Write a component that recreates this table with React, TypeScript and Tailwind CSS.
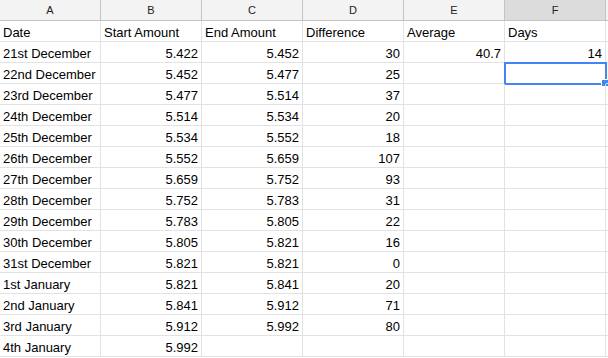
import React from "react";

const rows: [string, string, string, string, string, string][] = [
  ["Date", "Start Amount", "End Amount", "Difference", "Average", "Days"],
  ["21st December", "5.422", "5.452", "30", "40.7", "14"],
  ["22nd December", "5.452", "5.477", "25", "", ""],
  ["23rd December", "5.477", "5.514", "37", "", ""],
  ["24th December", "5.514", "5.534", "20", "", ""],
  ["25th December", "5.534", "5.552", "18", "", ""],
  ["26th December", "5.552", "5.659", "107", "", ""],
  ["27th December", "5.659", "5.752", "93", "", ""],
  ["28th December", "5.752", "5.783", "31", "", ""],
  ["29th December", "5.783", "5.805", "22", "", ""],
  ["30th December", "5.805", "5.821", "16", "", ""],
  ["31st December", "5.821", "5.821", "0", "", ""],
  ["1st January", "5.821", "5.841", "20", "", ""],
  ["2nd January", "5.841", "5.912", "71", "", ""],
  ["3rd January", "5.912", "5.992", "80", "", ""],
  ["4th January", "5.992", "", "", "", ""],
];

const letters = ["A", "B", "C", "D", "E", "F", ""];

export default function App() {
  return (
    <div
      className="w-[608px] h-[358px] overflow-hidden bg-white"
      style={{ fontFamily: '"Liberation Sans", Arial, sans-serif' }}
    >
      <div className="grid grid-cols-[101px_101px_101px_101px_101px_101px_1fr]">
        {letters.map((l, i) => (
          <div
            key={"h" + i}
            className={`h-[21px] flex items-center justify-center pt-[1px] text-[11px] text-[#222] border-r border-b border-[#c4c4c4] ${
              l === "F" ? "bg-[#dcdcdc]" : "bg-[#f3f3f3]"
            }`}
          >
            {l}
          </div>
        ))}
        {rows.map((r, ri) =>
          [...r, ""].map((c, ci) => {
            const numeric = ri > 0 && ci > 0;
            const selected = ri === 2 && ci === 5;
            return (
              <div
                key={ri + "-" + ci}
                className={`relative h-[21px] flex items-end pb-[1px] px-[3px] text-[13px] leading-[15px] text-black border-r border-b border-[#e2e2e2] whitespace-nowrap ${
                  numeric ? "justify-end" : "justify-start"
                }`}
              >
                {c}
                {selected && (
                  <>
                    <div className="absolute left-[-1px] top-[-1px] right-[-2px] bottom-[-2px] border-2 border-[#4285f4]" />
                    <div className="absolute right-[-4px] bottom-[-4px] w-[6px] h-[6px] bg-[#4285f4] border border-white box-content" />
                  </>
                )}
              </div>
            );
          })
        )}
      </div>
    </div>
  );
}
